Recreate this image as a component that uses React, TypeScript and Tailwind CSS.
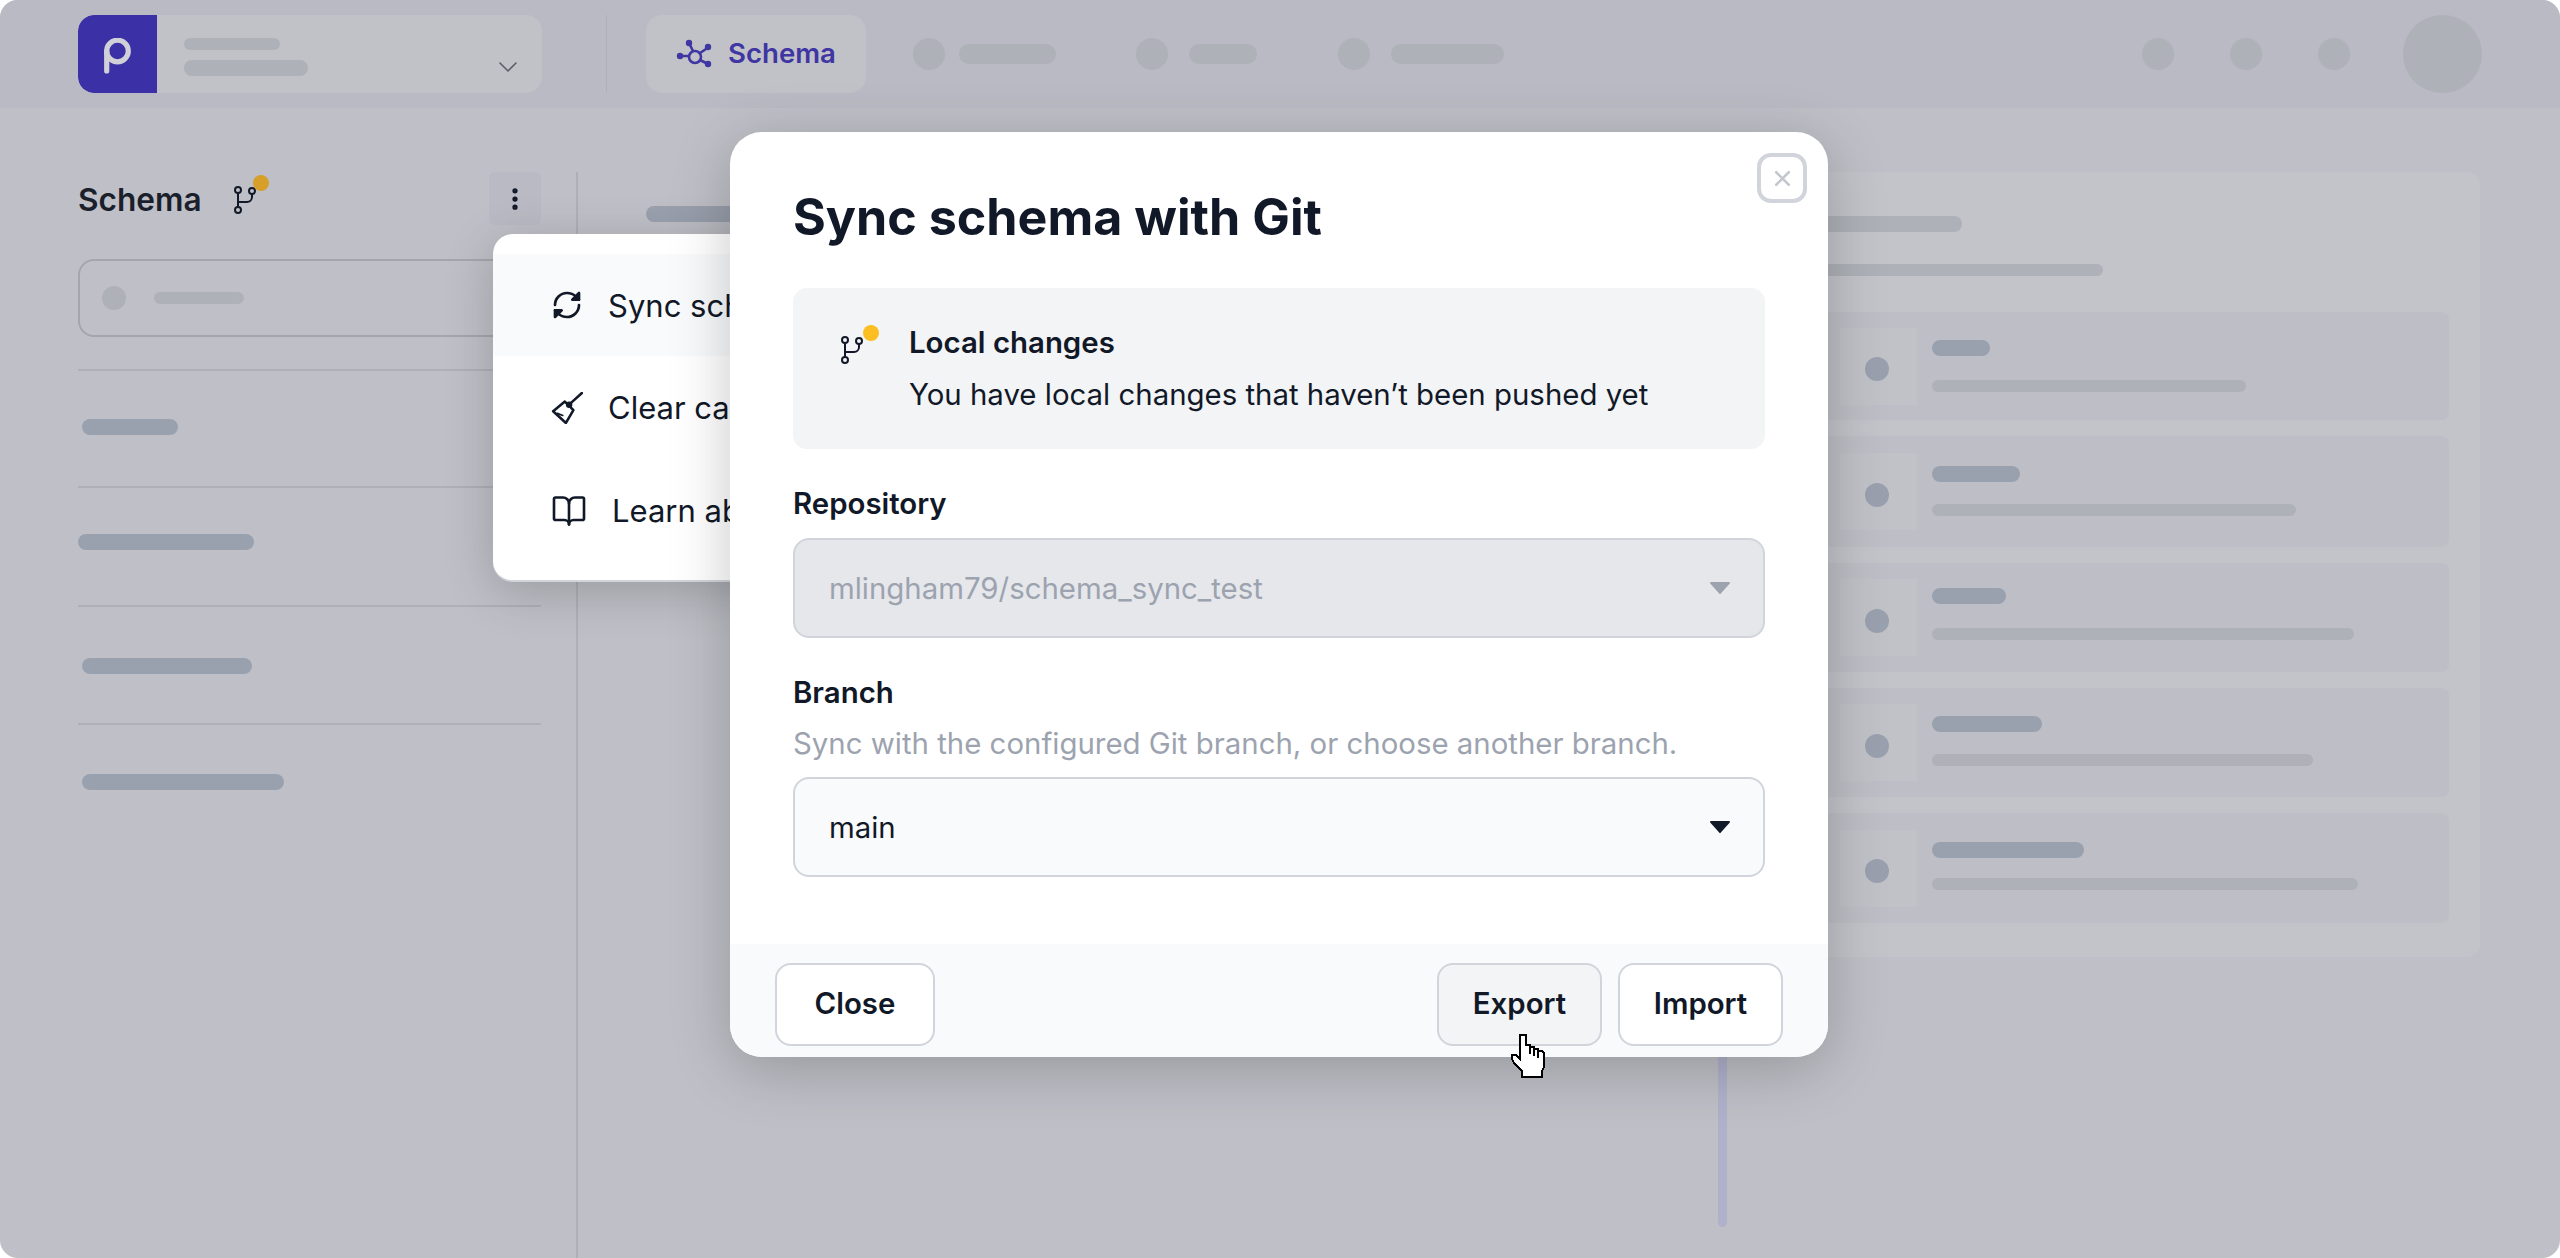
import React from 'react';
import { BookOpen, ChevronDown, EllipsisVertical, X } from 'lucide-react';

const rows = [
  { h: 'h-[108px]', pt: 'pt-[28px]', title: 'w-[58px]', gap: 'mt-[24px]', sub: 'w-[314px]' },
  { h: 'h-[111px]', pt: 'pt-[30px]', title: 'w-[88px]', gap: 'mt-[22px]', sub: 'w-[364px]' },
  { h: 'h-[109px]', pt: 'pt-[25px]', title: 'w-[74px]', gap: 'mt-[24px]', sub: 'w-[422px]' },
  { h: 'h-[109px]', pt: 'pt-[28px]', title: 'w-[110px]', gap: 'mt-[22px]', sub: 'w-[381px]' },
  { h: 'h-[110px]', pt: 'pt-[29px]', title: 'w-[152px]', gap: 'mt-[20px]', sub: 'w-[426px]' },
];

function GitIcon({ dot }: { dot: string }) {
  return (
    <div className="relative w-[38px] h-[40px] shrink-0">
      <svg width="26" height="30" viewBox="0 0 26 30" fill="none" stroke="#111827" strokeWidth="2" className="absolute left-0 bottom-0">
        <circle cx="4" cy="5" r="3" />
        <circle cx="4" cy="25" r="3" />
        <circle cx="18" cy="6" r="3" />
        <path d="M4 8v14M18 9v3a5 5 0 0 1-5 5H4" />
      </svg>
      <div className={`absolute top-0 w-[16px] h-[16px] rounded-full ${dot}`} />
    </div>
  );
}

function SyncIcon() {
  return (
    <svg width="32" height="32" viewBox="0 0 24 24" fill="none" stroke="#111827" strokeWidth="2" strokeLinecap="round" strokeLinejoin="round" className="shrink-0">
      <path d="M3 12a9 9 0 0 1 9-9 9.75 9.75 0 0 1 6.74 2.74L21 8" />
      <path d="M21 3v5h-5z" fill="#111827" />
      <path d="M21 12a9 9 0 0 1-9 9 9.75 9.75 0 0 1-6.74-2.74L3 16" />
      <path d="M8 16H3v5z" fill="#111827" />
    </svg>
  );
}

function BroomIcon() {
  return (
    <svg width="32" height="32" viewBox="0 0 30 30" fill="none" stroke="#111827" strokeWidth="2.4" strokeLinecap="round" strokeLinejoin="round" className="shrink-0">
      <path d="M29 1 19 10" />
      <circle cx="17" cy="12" r="3" fill="#111827" stroke="none" />
      <path d="M2 18 13 9l8 8-7 12z" />
      <path d="M6 20l5 2" strokeWidth="1.6" />
    </svg>
  );
}

function SchemaIcon() {
  return (
    <svg width="36" height="30" viewBox="0 0 36 30" fill="none" stroke="#3f35a3" strokeWidth="2.6" className="shrink-0">
      <circle cx="19" cy="18" r="6" />
      <circle cx="13" cy="4" r="3.2" fill="#3f35a3" stroke="none" />
      <circle cx="32" cy="8" r="3.2" fill="#3f35a3" stroke="none" />
      <circle cx="32" cy="25" r="3.2" fill="#3f35a3" stroke="none" />
      <circle cx="4" cy="17" r="3.2" fill="#3f35a3" stroke="none" />
      <path d="M14 6l3 6M30 10l-6 4M30 24l-6-3M6 17h7" />
    </svg>
  );
}

function HandCursor() {
  return (
    <svg width="36" height="44" viewBox="0 0 18 22" shapeRendering="crispEdges" className="absolute left-[1511px] top-[1034px]">
      <path d="M4.5.5h3v5h2v1h2v1h2v1h2l1 1v7l-1 2v3h-10v-3l-2-2-2-2-1-2v-2h2l2 2z" fill="#fff" stroke="#000" strokeWidth="1" />
      <path d="M9.5 6v4M11.5 7v4M13.5 8v4" stroke="#000" strokeWidth="1" fill="none" />
    </svg>
  );
}

function TriangleDown({ color }: { color: string }) {
  return (
    <svg width="22" height="14" viewBox="0 0 22 14" className="shrink-0">
      <path d="M2 1h18a1 1 0 0 1 .8 1.6l-9 10a1 1 0 0 1-1.6 0l-9-10A1 1 0 0 1 2 1z" fill={color} />
    </svg>
  );
}

function Modal() {
  return (
    <div className="absolute left-[730px] top-[132px] w-[1098px] h-[925px] bg-white rounded-[32px] shadow-[0_12px_60px_rgba(0,0,0,0.22)] flex flex-col overflow-hidden text-[#111827]">
      <button className="absolute right-[21px] top-[21px] w-[50px] h-[50px] rounded-[14px] border-4 border-[#d1d5db] flex items-center justify-center">
        <X size={25} strokeWidth={2.5} className="text-[#c4c8ce]" />
      </button>
      <div className="flex-1 px-[63px] pt-[56px]">
        <h2 className="text-[50.2px] leading-[58px] font-bold">Sync schema with Git</h2>
        <div className="mt-[42px] h-[161px] bg-[#f3f4f6] rounded-[14px] pl-[48px] pt-[35px] flex gap-[30px]">
          <div className="mt-[2px]">
            <GitIcon dot="right-0 bg-[#fbbf24]" />
          </div>
          <div>
            <div className="text-[29.4px] leading-[40px] font-semibold">Local changes</div>
            <div className="mt-[12px] text-[29.4px] leading-[40px]">You have local changes that haven’t been pushed yet</div>
          </div>
        </div>
        <div className="mt-[38px] text-[29.4px] leading-[34px] font-semibold">Repository</div>
        <div className="mt-[17px] h-[100px] bg-[#e5e7eb] border-2 border-[#d1d5db] rounded-[16px] pl-[34px] pr-[32px] flex items-center justify-between">
          <span className="pt-[2px] text-[29.4px] text-[#9ca3af]">mlingham79/schema_sync_test</span>
          <TriangleDown color="#9ca3af" />
        </div>
        <div className="mt-[38px] text-[29.4px] leading-[34px] font-semibold">Branch</div>
        <div className="mt-[17px] text-[29.4px] leading-[34px] text-[#9ca3af]">Sync with the configured Git branch, or choose another branch.</div>
        <div className="mt-[16px] h-[100px] bg-[#f9fafb] border-2 border-[#d1d5db] rounded-[16px] pl-[34px] pr-[32px] flex items-center justify-between">
          <span className="pt-[2px] text-[29.4px]">main</span>
          <TriangleDown color="#111827" />
        </div>
      </div>
      <div className="h-[113px] bg-[#f9fafb] px-[45px] pt-[19px] flex items-start justify-between">
        <button className="w-[160px] h-[83px] bg-white border-2 border-[#d1d5db] rounded-[16px] text-[29.4px] font-semibold">Close</button>
        <div className="flex gap-[16px]">
          <button className="w-[165px] h-[83px] bg-[#f3f4f6] border-2 border-[#d1d5db] rounded-[16px] text-[29.4px] font-semibold">Export</button>
          <button className="w-[165px] h-[83px] bg-white border-2 border-[#d1d5db] rounded-[16px] text-[29.4px] font-semibold">Import</button>
        </div>
      </div>
    </div>
  );
}

function Dropdown() {
  return (
    <div className="absolute left-[493px] top-[234px] w-[480px] h-[348px] bg-white rounded-[20px] border-b-2 border-[#d1d5db] shadow-[0_10px_50px_rgba(0,0,0,0.2)] py-[20px] text-[#111827] text-[31px]">
      <div className="h-[102px] bg-[#f9fafb] pl-[58px] flex items-center gap-[25px] whitespace-nowrap">
        <SyncIcon />
        <span className="pt-[2px]">Sync schema with Git</span>
      </div>
      <div className="h-[103px] pl-[58px] flex items-center gap-[25px] whitespace-nowrap">
        <BroomIcon />
        <span className="pt-[2px]">Clear cache</span>
      </div>
      <div className="h-[103px] pl-[58px] flex items-center gap-[25px] whitespace-nowrap">
        <BookOpen size={36} strokeWidth={1.75} className="shrink-0" />
        <span className="pt-[2px]">Learn about schemas</span>
      </div>
    </div>
  );
}

export default function App() {
  return (
    <div className="relative w-full h-screen bg-white overflow-hidden font-['Inter',sans-serif]">
      <div className="w-full h-full rounded-[18px] overflow-hidden bg-[#bfc0c7] flex flex-col">
        <header className="h-[108px] shrink-0 bg-[#b9bac3] pl-[78px] pr-[78px] flex items-center">
          <div className="w-[464px] h-[78px] bg-[#c1c2c8] rounded-[16px] flex overflow-hidden">
            <div className="w-[79px] bg-[#3b30a6] rounded-l-[16px] flex items-center justify-center">
              <svg width="27" height="36" viewBox="0 0 27 36" fill="none" stroke="#d0d0d8" strokeWidth="5.2" strokeLinecap="round" className="mt-[4px]">
                <circle cx="13.5" cy="13" r="10.8" />
                <path d="M2.7 13v20" />
              </svg>
            </div>
            <div className="flex-1 pl-[27px] pr-[24px] pt-[23px] relative">
              <div className="w-[96px] h-[12px] rounded-full bg-[#aeb1b7]" />
              <div className="mt-[10px] w-[124px] h-[16px] rounded-full bg-[#aeb1b7]" />
              <ChevronDown size={32} strokeWidth={1.2} className="absolute right-[18px] top-[36px] text-[#5b5e68]" />
            </div>
          </div>
          <div className="ml-[64px] w-[1px] h-[78px] bg-[#aeb0b8]" />
          <div className="ml-[39px] w-[220px] h-[78px] rounded-[16px] bg-[#c1c2c8] flex items-center justify-center gap-[16px]">
            <SchemaIcon />
            <span className="text-[27.6px] font-semibold text-[#3f35a3]">Schema</span>
          </div>
          <div className="ml-[47px] flex items-center">
            <div className="w-[32px] h-[32px] rounded-full bg-[#aeb1b7]" />
            <div className="ml-[14px] w-[97px] h-[20px] rounded-full bg-[#aeb1b7]" />
            <div className="ml-[80px] w-[32px] h-[32px] rounded-full bg-[#aeb1b7]" />
            <div className="ml-[21px] w-[68px] h-[20px] rounded-full bg-[#aeb1b7]" />
            <div className="ml-[81px] w-[32px] h-[32px] rounded-full bg-[#aeb1b7]" />
            <div className="ml-[21px] w-[113px] h-[20px] rounded-full bg-[#aeb1b7]" />
          </div>
          <div className="ml-auto flex items-center gap-[56px]">
            <div className="w-[32px] h-[32px] rounded-full bg-[#aeb1b7]" />
            <div className="w-[32px] h-[32px] rounded-full bg-[#aeb1b7]" />
            <div className="w-[32px] h-[32px] rounded-full bg-[#aeb1b7]" />
            <div className="ml-[-3px] w-[79px] h-[78px] rounded-full bg-[#aeb1b7]" />
          </div>
        </header>
        <div className="flex-1 flex pt-[64px] min-h-0">
          <aside className="w-[578px] shrink-0 pl-[78px] pr-[35px] border-r-2 border-[#aeb0b8]">
            <div className="h-[53px] flex items-center">
              <span className="pt-[2px] text-[31.6px] font-semibold text-[#1a1f2b]">Schema</span>
              <div className="ml-[32px] -mt-[8px]">
                <GitIcon dot="right-[3px] bg-[#d59f2a]" />
              </div>
              <div className="ml-auto w-[52px] h-[53px] bg-[#b9bac3] rounded-[6px] flex items-center justify-center">
                <EllipsisVertical size={28} strokeWidth={2.5} className="text-[#111827]" />
              </div>
            </div>
            <div className="mt-[34px] h-[78px] rounded-[16px] border-2 border-[#a4a6ae] pl-[22px] flex items-center">
              <div className="w-[24px] h-[24px] rounded-full bg-[#aeb1b7]" />
              <div className="ml-[28px] w-[90px] h-[12px] rounded-full bg-[#aeb1b7]" />
            </div>
            <div className="mt-[32px] border-t-2 border-[#aeb0b8] pt-[48px] h-[117px] pl-[4px]">
              <div className="w-[96px] h-[16px] rounded-full bg-[#9aa1ae]" />
            </div>
            <div className="border-t-2 border-[#aeb0b8] pt-[46px] h-[119px]">
              <div className="w-[176px] h-[16px] rounded-full bg-[#9aa1ae]" />
            </div>
            <div className="border-t-2 border-[#aeb0b8] pt-[51px] h-[118px] pl-[4px]">
              <div className="w-[170px] h-[16px] rounded-full bg-[#9aa1ae]" />
            </div>
            <div className="border-t-2 border-[#aeb0b8] pt-[49px] pl-[4px]">
              <div className="w-[202px] h-[16px] rounded-full bg-[#9aa1ae]" />
            </div>
          </aside>
          <main className="flex-1 flex flex-col pl-[68px] pr-[73px] pt-[34px]">
            <div className="w-[200px] h-[16px] rounded-full bg-[#9aa1ae]" />
            <div className="self-end mt-[778px] w-[9px] h-[227px] rounded-b-[6px] bg-[#b0b2cb]" />
          </main>
          <section className="w-[680px] shrink-0 mr-[80px] self-start h-[785px] bg-[#c3c4ca] rounded-[14px] pt-[44px] pl-[15px] pr-[31px]">
            <div className="ml-[5px] w-[142px] h-[16px] rounded-full bg-[#aeb1b7]" />
            <div className="ml-[5px] mt-[32px] w-[283px] h-[12px] rounded-full bg-[#aeb1b7]" />
            <div className="mt-[36px] flex flex-col gap-[16px]">
              {rows.map((row, index) => (
                <div key={index} className={`${row.h} bg-[#bebfc6] rounded-[8px] pl-[25px] flex items-center`}>
                  <div className="w-[77px] h-[77px] bg-[#c1c2c8] flex items-center justify-center shrink-0">
                    <div className="mt-[6px] mr-[4px] w-[24px] h-[24px] rounded-full bg-[#9aa1ae]" />
                  </div>
                  <div className={`ml-[15px] self-start ${row.pt}`}>
                    <div className={`${row.title} h-[16px] rounded-full bg-[#9aa1ae]`} />
                    <div className={`${row.gap} ${row.sub} h-[12px] rounded-full bg-[#aeb1b7]`} />
                  </div>
                </div>
              ))}
            </div>
          </section>
        </div>
      </div>
      <Dropdown />
      <Modal />
      <HandCursor />
    </div>
  );
}
